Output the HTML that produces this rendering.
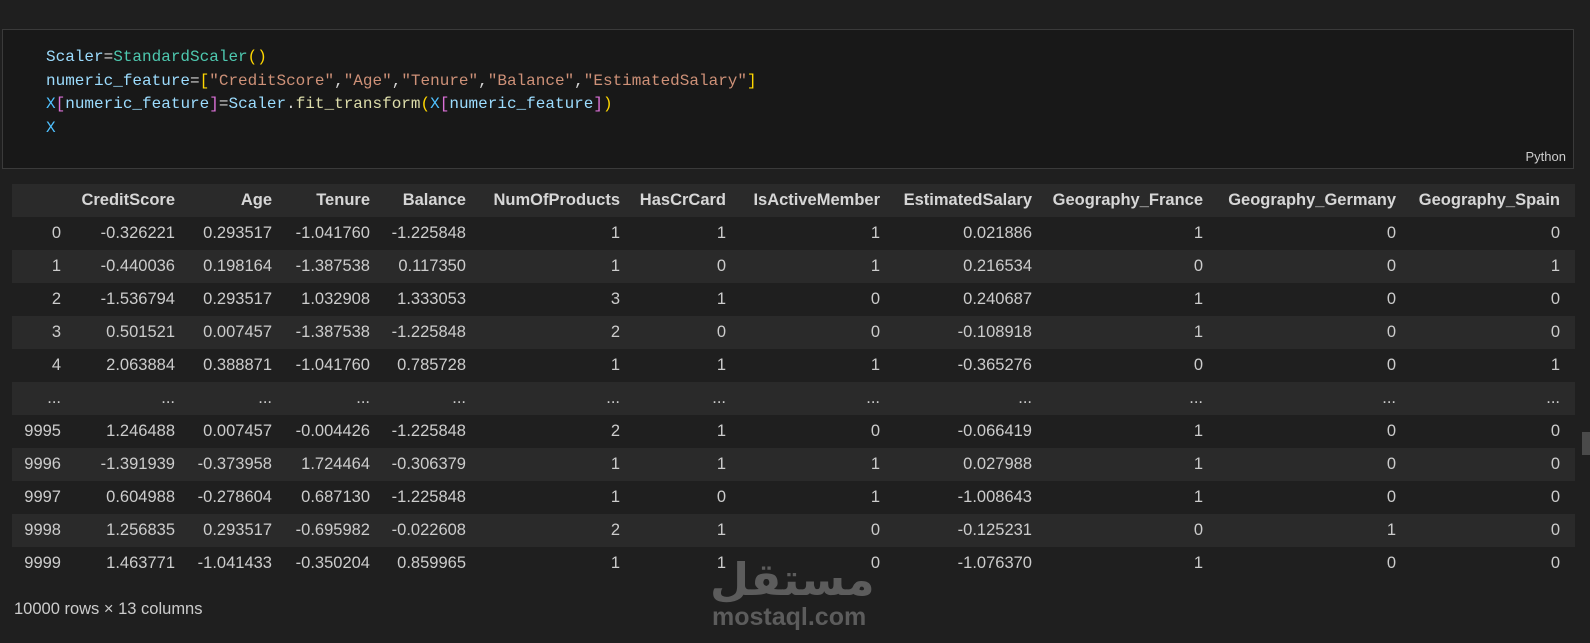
<!DOCTYPE html>
<html><head><meta charset="utf-8"><style>
body{margin:0;width:1590px;height:643px;background:#1f1f1f;overflow:hidden;position:relative;font-family:"Liberation Sans",sans-serif;}
.code{position:absolute;left:2px;top:29px;width:1570px;height:138px;background:#181818;border:1px solid #3a3a3a;}
.code pre{margin:0;position:absolute;left:43px;top:16px;font-family:"Liberation Mono",monospace;font-size:16px;line-height:23.7px;color:#9cdcfe;}
.g{color:#4ec9b0}.y{color:#ffd700}.p{color:#da70d6}.s{color:#ce9178}.w{color:#d4d4d4}.lb{color:#4fc1ff}
.py{position:absolute;right:7px;bottom:4px;font-size:13px;color:#cccccc;}
table{position:absolute;left:12px;top:184px;border-collapse:collapse;table-layout:fixed;color:#cccccc;font-size:16.5px;}
td,th{padding:0;text-align:right;height:33px;white-space:nowrap;}
th{font-weight:bold;color:#d6d6d6;}
tr.l{background:#2a2a2a}
.f{position:absolute;left:14px;top:600px;color:#cccccc;font-size:16.5px;}
.wm1{position:absolute;left:710px;top:553px;font-size:45px;font-weight:bold;color:#5c5c5c;font-family:"DejaVu Sans",sans-serif;line-height:54px;}
.wm2{position:absolute;left:712px;top:603px;font-size:25px;font-weight:bold;color:#5c5c5c;}
.sb{position:absolute;left:1582px;top:432px;width:8px;height:23px;background:#4a4a4a;}
</style></head><body>
<div class="code"><pre>Scaler<span class="w">=</span><span class="g">StandardScaler</span><span class="y">()</span>
numeric_feature<span class="w">=</span><span class="y">[</span><span class="s">"CreditScore"</span><span class="w">,</span><span class="s">"Age"</span><span class="w">,</span><span class="s">"Tenure"</span><span class="w">,</span><span class="s">"Balance"</span><span class="w">,</span><span class="s">"EstimatedSalary"</span><span class="y">]</span>
<span class="lb">X</span><span class="p">[</span>numeric_feature<span class="p">]</span><span class="w">=</span>Scaler<span class="w">.</span><span style="color:#dcdcaa">fit_transform</span><span class="y">(</span><span class="lb">X</span><span class="p">[</span>numeric_feature<span class="p">]</span><span class="y">)</span>
<span class="lb">X</span></pre><div class="py">Python</div></div>
<table>
<colgroup><col style="width:49px"><col style="width:114px"><col style="width:97px"><col style="width:98px"><col style="width:96px"><col style="width:154px"><col style="width:106px"><col style="width:154px"><col style="width:152px"><col style="width:171px"><col style="width:193px"><col style="width:164px"><col style="width:15px"></colgroup>
<tr class="l"><th></th><th>CreditScore</th><th>Age</th><th>Tenure</th><th>Balance</th><th>NumOfProducts</th><th>HasCrCard</th><th>IsActiveMember</th><th>EstimatedSalary</th><th>Geography_France</th><th>Geography_Germany</th><th>Geography_Spain</th><th></th></tr>
<tr><td>0</td><td>-0.326221</td><td>0.293517</td><td>-1.041760</td><td>-1.225848</td><td>1</td><td>1</td><td>1</td><td>0.021886</td><td>1</td><td>0</td><td>0</td><td></td></tr>
<tr class="l"><td>1</td><td>-0.440036</td><td>0.198164</td><td>-1.387538</td><td>0.117350</td><td>1</td><td>0</td><td>1</td><td>0.216534</td><td>0</td><td>0</td><td>1</td><td></td></tr>
<tr><td>2</td><td>-1.536794</td><td>0.293517</td><td>1.032908</td><td>1.333053</td><td>3</td><td>1</td><td>0</td><td>0.240687</td><td>1</td><td>0</td><td>0</td><td></td></tr>
<tr class="l"><td>3</td><td>0.501521</td><td>0.007457</td><td>-1.387538</td><td>-1.225848</td><td>2</td><td>0</td><td>0</td><td>-0.108918</td><td>1</td><td>0</td><td>0</td><td></td></tr>
<tr><td>4</td><td>2.063884</td><td>0.388871</td><td>-1.041760</td><td>0.785728</td><td>1</td><td>1</td><td>1</td><td>-0.365276</td><td>0</td><td>0</td><td>1</td><td></td></tr>
<tr class="l"><td>...</td><td>...</td><td>...</td><td>...</td><td>...</td><td>...</td><td>...</td><td>...</td><td>...</td><td>...</td><td>...</td><td>...</td><td></td></tr>
<tr><td>9995</td><td>1.246488</td><td>0.007457</td><td>-0.004426</td><td>-1.225848</td><td>2</td><td>1</td><td>0</td><td>-0.066419</td><td>1</td><td>0</td><td>0</td><td></td></tr>
<tr class="l"><td>9996</td><td>-1.391939</td><td>-0.373958</td><td>1.724464</td><td>-0.306379</td><td>1</td><td>1</td><td>1</td><td>0.027988</td><td>1</td><td>0</td><td>0</td><td></td></tr>
<tr><td>9997</td><td>0.604988</td><td>-0.278604</td><td>0.687130</td><td>-1.225848</td><td>1</td><td>0</td><td>1</td><td>-1.008643</td><td>1</td><td>0</td><td>0</td><td></td></tr>
<tr class="l"><td>9998</td><td>1.256835</td><td>0.293517</td><td>-0.695982</td><td>-0.022608</td><td>2</td><td>1</td><td>0</td><td>-0.125231</td><td>0</td><td>1</td><td>0</td><td></td></tr>
<tr><td>9999</td><td>1.463771</td><td>-1.041433</td><td>-0.350204</td><td>0.859965</td><td>1</td><td>1</td><td>0</td><td>-1.076370</td><td>1</td><td>0</td><td>0</td><td></td></tr>
</table>
<div class="f">10000 rows × 13 columns</div>
<div class="wm1">مستقل</div>
<div class="wm2">mostaql.com</div>
<div class="sb"></div>
</body></html>
